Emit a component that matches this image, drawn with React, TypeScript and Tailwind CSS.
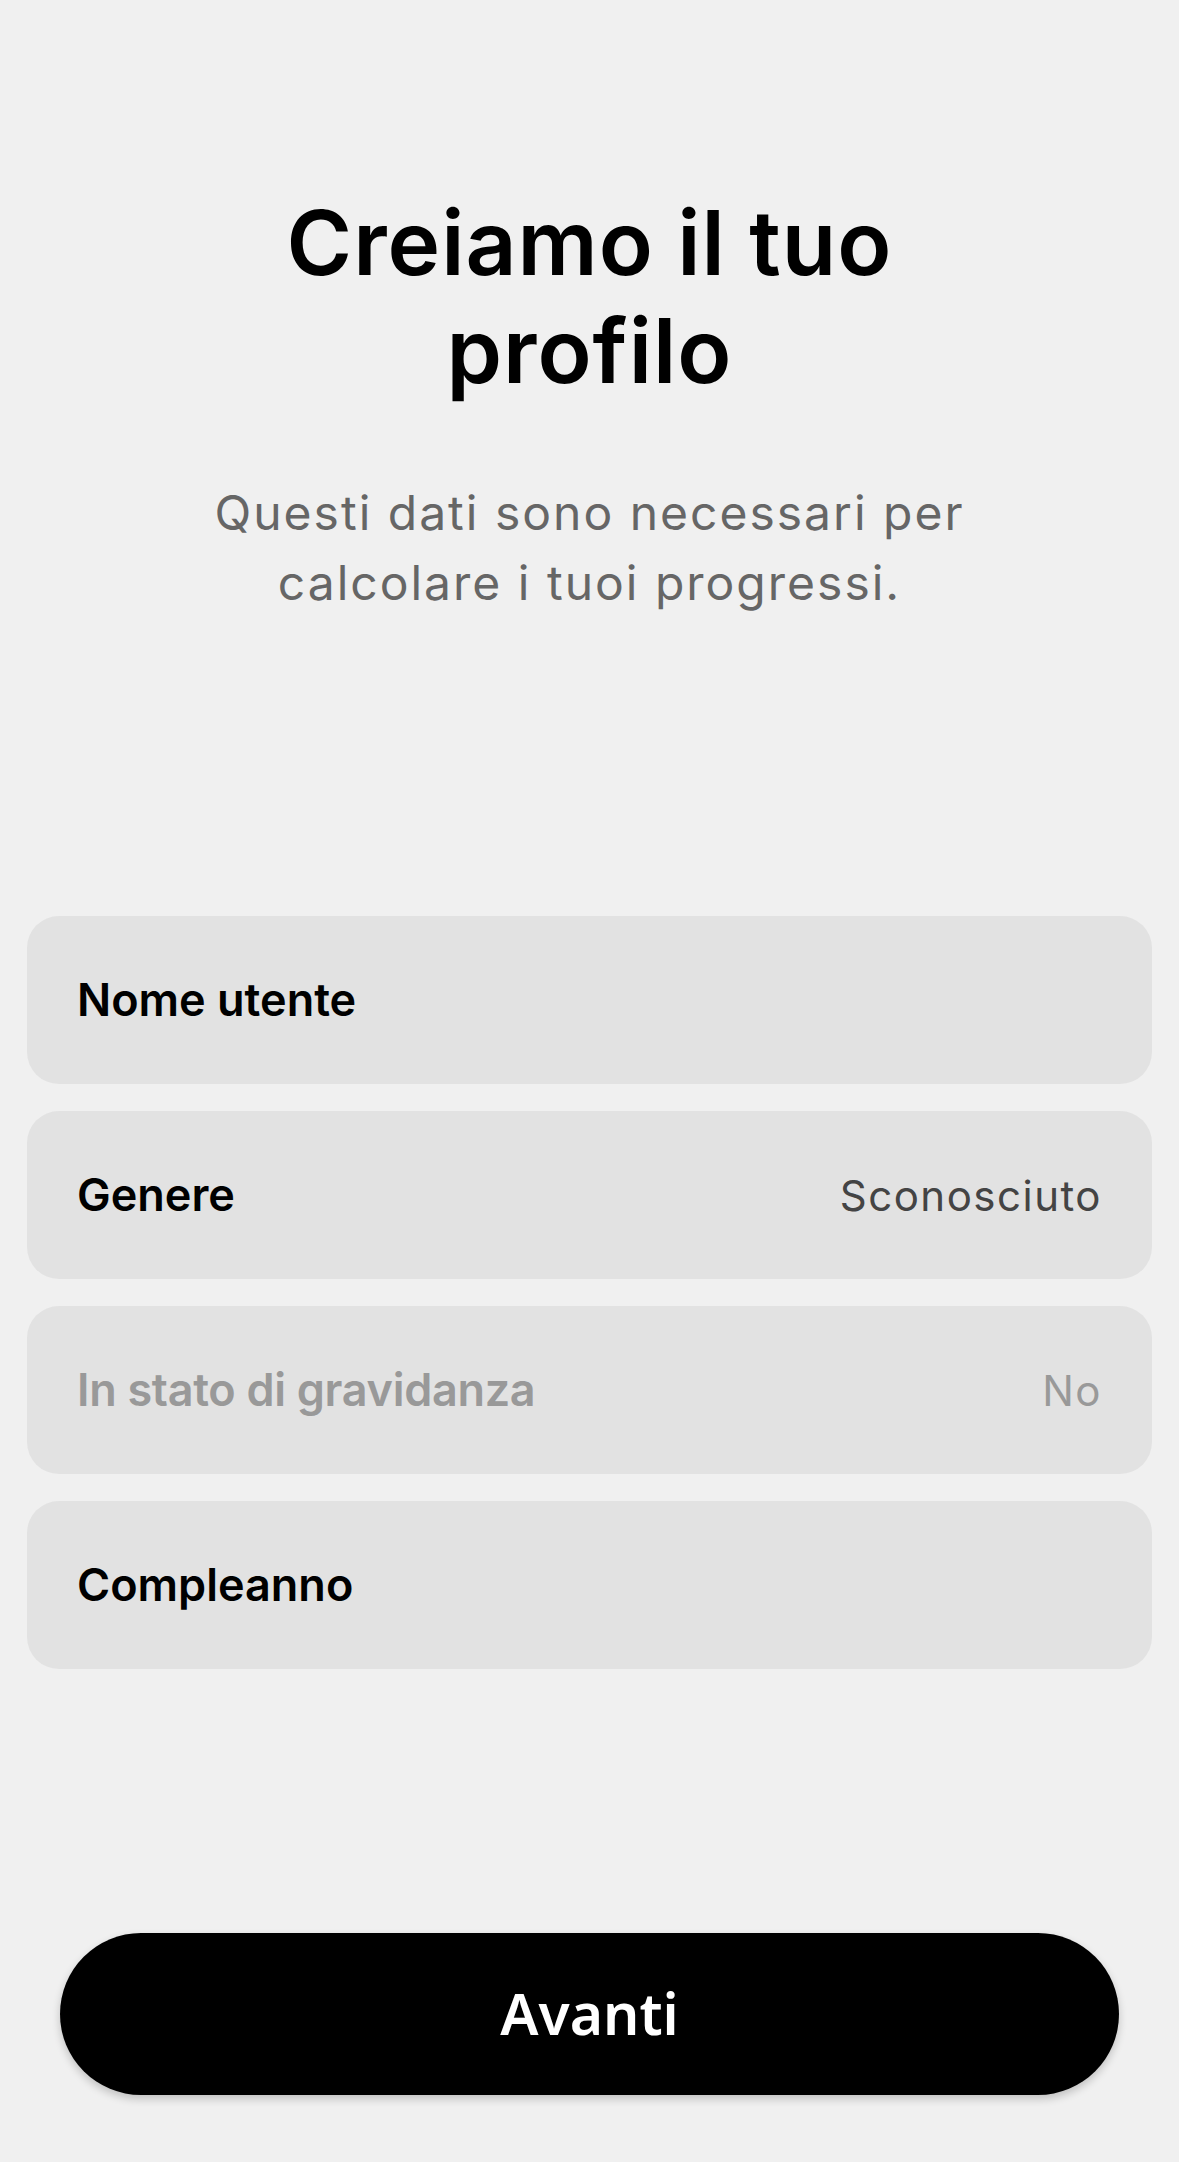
import React from 'react';

const rows = [
  { label: 'Nome utente', value: '', disabled: false },
  { label: 'Genere', value: 'Sconosciuto', disabled: false },
  { label: 'In stato di gravidanza', value: 'No', disabled: true },
  { label: 'Compleanno', value: '', disabled: false },
];

const App: React.FC = () => {
  return (
    <div className="min-h-[2162px] bg-[#f0f0f0] flex flex-col font-['Inter',sans-serif]">
      <div className="pt-[189px] flex flex-col items-center text-center">
        <h1 className="text-[89px] leading-[108px] font-semibold text-black tracking-[1px]">
          Creiamo il tuo
          <br />
          profilo
        </h1>
        <p className="mt-[73px] text-[48px] leading-[70px] text-[#666666] tracking-[2px]">
          Questi dati sono necessari per
          <br />
          calcolare i tuoi progressi.
        </p>
      </div>

      <div className="mt-[298px] px-[27px] flex flex-col gap-[27px]">
        {rows.map((row) => (
          <div
            key={row.label}
            className="h-[168px] rounded-[32px] bg-[#e2e2e2] px-[50px] flex items-center justify-between"
          >
            <span
              className={
                row.disabled
                  ? 'text-[45px] font-semibold text-[#999999] tracking-[-0.3px]'
                  : 'text-[45px] font-semibold text-black tracking-[0px]'
              }
            >
              {row.label}
            </span>
            {row.value && (
              <span
                className={
                  row.disabled
                    ? 'text-[42px] text-[#999999] tracking-[1.5px]'
                    : 'text-[42px] text-[#444444] tracking-[1.5px]'
                }
              >
                {row.value}
              </span>
            )}
          </div>
        ))}
      </div>

      <div className="mt-auto px-[60px] pb-[67px]">
        <button className="w-full h-[162px] rounded-full bg-black text-white text-[57px] font-semibold font-['Noto_Sans',sans-serif] shadow-[0_4px_8px_rgba(0,0,0,0.2)]">
          Avanti
        </button>
      </div>
    </div>
  );
};

export default App;
